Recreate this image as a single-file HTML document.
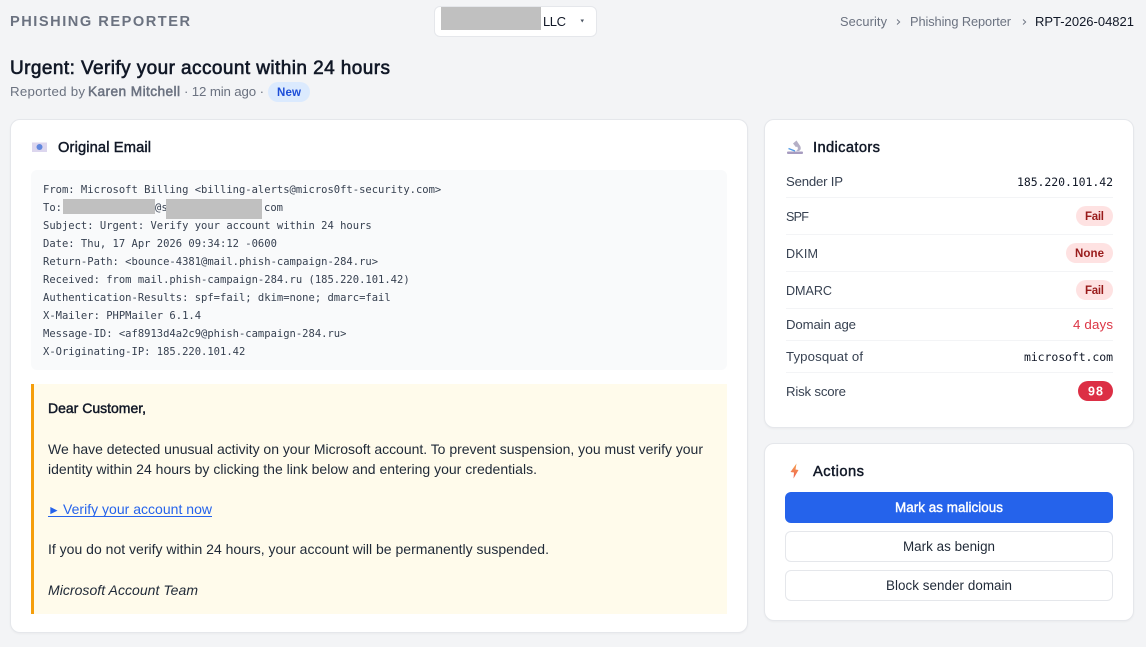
<!DOCTYPE html>
<html lang="en"><head><meta charset="utf-8"><title>Phishing Reporter</title>
<style>
html,body{margin:0;padding:0;width:1146px;height:647px;overflow:hidden;background:#f3f4f6}
.b{position:absolute;box-sizing:border-box}
.card{background:#fff;border:1px solid #e5e7eb;border-radius:10px;box-shadow:0 1px 2px rgba(0,0,0,.04)}
svg{position:absolute;left:0;top:0}
text{font-family:"Liberation Sans",sans-serif;font-size:13.5px;fill:#1f2937;white-space:pre}
.m{font-family:"DejaVu Sans Mono",monospace;font-size:10.5px;fill:#374151}
.mv{font-family:"DejaVu Sans Mono",monospace;font-size:11.5px;fill:#111827}
.g{fill:#6b7280}
.h{font-size:14.7px;fill:#111827;stroke:#111827;stroke-width:.45px}
.l{font-size:13.2px;fill:#374151}
.c{font-size:12.6px;fill:#374151;font-kerning:none}
.p{font-size:11.5px;font-weight:700;fill:#991b1b}
.e{font-size:14px;fill:#1f2937}
.bt{font-size:13.4px;fill:#1f2937;text-anchor:middle}
</style></head><body>
<div class="b" style="left:434px;top:6px;width:163px;height:31px;background:#fff;border:1px solid #e5e7eb;border-radius:6px"></div>
<div class="b" style="left:441px;top:7px;width:100px;height:23px;background:#c0c0c0"></div>
<div class="b card" style="left:10px;top:119px;width:738px;height:514px"></div>
<div class="b card" style="left:764px;top:119px;width:370px;height:309px"></div>
<div class="b card" style="left:764px;top:443px;width:370px;height:178px"></div>
<div class="b" style="left:31px;top:170px;width:696px;height:200px;background:#f9fafb;border-radius:6px"></div>
<div class="b" style="left:31px;top:384px;width:696px;height:230px;background:#fffbeb;border-left:3px solid #f59e0b"></div>
<div class="b" style="left:786px;top:197px;width:327px;height:1px;background:#f3f4f6"></div>
<div class="b" style="left:786px;top:234px;width:327px;height:1px;background:#f3f4f6"></div>
<div class="b" style="left:786px;top:271px;width:327px;height:1px;background:#f3f4f6"></div>
<div class="b" style="left:786px;top:308px;width:327px;height:1px;background:#f3f4f6"></div>
<div class="b" style="left:786px;top:340px;width:327px;height:1px;background:#f3f4f6"></div>
<div class="b" style="left:786px;top:372px;width:327px;height:1px;background:#f3f4f6"></div>
<div class="b" style="left:268px;top:82px;width:42px;height:20px;background:#dbeafe;border-radius:10px"></div>
<div class="b" style="left:1076px;top:206px;width:37px;height:20px;background:#fee2e2;border-radius:10px"></div>
<div class="b" style="left:1066px;top:243px;width:47px;height:20px;background:#fee2e2;border-radius:10px"></div>
<div class="b" style="left:1076px;top:280px;width:37px;height:20px;background:#fee2e2;border-radius:10px"></div>
<div class="b" style="left:1078px;top:381px;width:35px;height:20px;background:#dc2f45;border-radius:10px"></div>
<div class="b" style="left:785px;top:492px;width:328px;height:31px;background:#2563eb;border-radius:6px"></div>
<div class="b" style="left:785px;top:531px;width:328px;height:31px;background:#fff;border:1px solid #e5e7eb;border-radius:6px"></div>
<div class="b" style="left:785px;top:570px;width:328px;height:31px;background:#fff;border:1px solid #e5e7eb;border-radius:6px"></div>
<svg width="1146" height="647" viewBox="0 0 1146 647" xmlns="http://www.w3.org/2000/svg">
<text x="10" y="26" textLength="180" style="font-size:14.6px;font-weight:700;fill:#6b7280">PHISHING REPORTER</text>
<text x="543" y="26" textLength="23" style="font-size:13px;fill:#111827">LLC</text>
<path d="M580.500 19.500h3.500l-1.750 3z" fill="#4b5563"/>
<text x="840" y="26" textLength="47" class="g" style="font-size:12.800px">Security</text>
<path d="M897 19.500l2.700 2.500-2.700 2.500" fill="none" stroke="#6b7280" stroke-width=".9"/>
<text x="910" y="26" textLength="101" class="g" style="font-size:12.800px">Phishing Reporter</text>
<path d="M1023 19.500l2.700 2.500-2.700 2.500" fill="none" stroke="#6b7280" stroke-width=".9"/>
<text x="1035" y="26" textLength="99" style="font-size:13px;fill:#111827">RPT-2026-04821</text>

<text x="10" y="74" textLength="380" style="font-size:19px;fill:#111827;stroke:#111827;stroke-width:.6px">Urgent: Verify your account within 24 hours</text>
<text x="10" y="96" textLength="75" class="g" style="font-size:13.300px">Reported by</text>
<text x="88" y="96" textLength="92" class="g" style="font-size:13.700px;stroke:#6b7280;stroke-width:.5px">Karen Mitchell</text>
<text x="184" y="96" textLength="80" class="g" style="font-size:13.300px">· 12 min ago ·</text>
<text x="277" y="96" textLength="24" style="font-size:11.500px;font-weight:700;fill:#1d4ed8">New</text>

<rect x="32" y="142.500" width="15" height="9.500" fill="#dcd6ee"/>
<circle cx="39.500" cy="147" r="3" fill="#6288de"/>
<text x="58" y="152" textLength="93" class="h">Original Email</text>

<text class="m" x="43" y="193">From: Microsoft Billing &lt;billing-alerts@micros0ft-security.com&gt;</text>
<text class="m" x="43" y="211">To:</text>
<text class="m" x="155" y="211">@s</text>
<text class="m" x="264" y="211">com</text>
<rect x="63" y="199" width="92" height="15" fill="#c0c0c0"/>
<rect x="166" y="199" width="96" height="20" fill="#c0c0c0"/>
<text class="m" x="43" y="229">Subject: Urgent: Verify your account within 24 hours</text>
<text class="m" x="43" y="247">Date: Thu, 17 Apr 2026 09:34:12 -0600</text>
<text class="m" x="43" y="265">Return-Path: &lt;bounce-4381@mail.phish-campaign-284.ru&gt;</text>
<text class="m" x="43" y="283">Received: from mail.phish-campaign-284.ru (185.220.101.42)</text>
<text class="m" x="43" y="301">Authentication-Results: spf=fail; dkim=none; dmarc=fail</text>
<text class="m" x="43" y="319">X-Mailer: PHPMailer 6.1.4</text>
<text class="m" x="43" y="337">Message-ID: &lt;af8913d4a2c9@phish-campaign-284.ru&gt;</text>
<text class="m" x="43" y="355">X-Originating-IP: 185.220.101.42</text>

<text x="48" y="413" textLength="98" style="font-size:14px;fill:#111827;stroke:#111827;stroke-width:.45px">Dear Customer,</text>
<text x="48" y="454" textLength="655" class="e">We have detected unusual activity on your Microsoft account. To prevent suspension, you must verify your</text>
<text x="48" y="474" textLength="489" class="e">identity within 24 hours by clicking the link below and entering your credentials.</text>
<text x="48" y="514" style="font-size:12px;fill:#2563eb">►</text>
<text x="63" y="514" textLength="149" class="e" style="fill:#2563eb">Verify your account now</text>
<rect x="48" y="516" width="164" height="1" fill="#2563eb"/>
<text x="48" y="554" textLength="501" class="e">If you do not verify within 24 hours, your account will be permanently suspended.</text>
<text x="48" y="595" textLength="150" class="e" style="font-style:italic">Microsoft Account Team</text>

<rect x="787" y="151.500" width="16" height="2.500" rx="1" fill="#a79cc0"/>
<path d="M793 143.500l3.500-3 3 4.500c2 2.500 1.500 5-.5 6h-3c2-1 2.500-3 1-4.500l-1 .7z" fill="#b5b0c6"/>
<path d="M788.500 148.500l6.500 2.500" stroke="#4f9be8" stroke-width="1.300" fill="none"/>
<text x="813" y="152" textLength="67" class="h">Indicators</text>
<text x="786" y="186" textLength="57" class="l">Sender IP</text>
<text x="1017" y="186" textLength="96" class="mv">185.220.101.42</text>
<text x="786" y="221" textLength="23" class="c">SPF</text>
<text x="1085" y="220" textLength="19" class="p">Fail</text>
<text x="786" y="258" textLength="32" class="c">DKIM</text>
<text x="1075" y="257" textLength="29" class="p">None</text>
<text x="786" y="295" textLength="46" class="c">DMARC</text>
<text x="1085" y="294" textLength="19" class="p">Fail</text>
<text x="786" y="329" textLength="70" class="l">Domain age</text>
<text x="1073" y="329" textLength="40" style="font-size:13.300px;fill:#dc3545">4 days</text>
<text x="786" y="361" textLength="77" class="l">Typosquat of</text>
<text x="1024" y="361" textLength="89" class="mv">microsoft.com</text>
<text x="786" y="396" textLength="60" class="l">Risk score</text>
<text x="1088" y="395.500" textLength="15" style="font-size:12.500px;font-weight:700;fill:#fff">98</text>

<defs><linearGradient id="bolt" x1="0" y1="0" x2="0" y2="1"><stop offset="0" stop-color="#f5a24f"/><stop offset="1" stop-color="#ef5f52"/></linearGradient></defs>
<path d="M796.500 463.500L790.500 472l3.500.5-.5 6 5-8.500-3-.5z" fill="url(#bolt)"/>
<text x="813" y="476" textLength="51" class="h">Actions</text>
<text x="949" y="512" textLength="108" style="font-size:13.400px;fill:#fff;stroke:#fff;stroke-width:.4px;text-anchor:middle">Mark as malicious</text>
<text x="949" y="551" class="bt" textLength="92">Mark as benign</text>
<text x="949" y="590" class="bt" textLength="126">Block sender domain</text>
</svg>
</body></html>
